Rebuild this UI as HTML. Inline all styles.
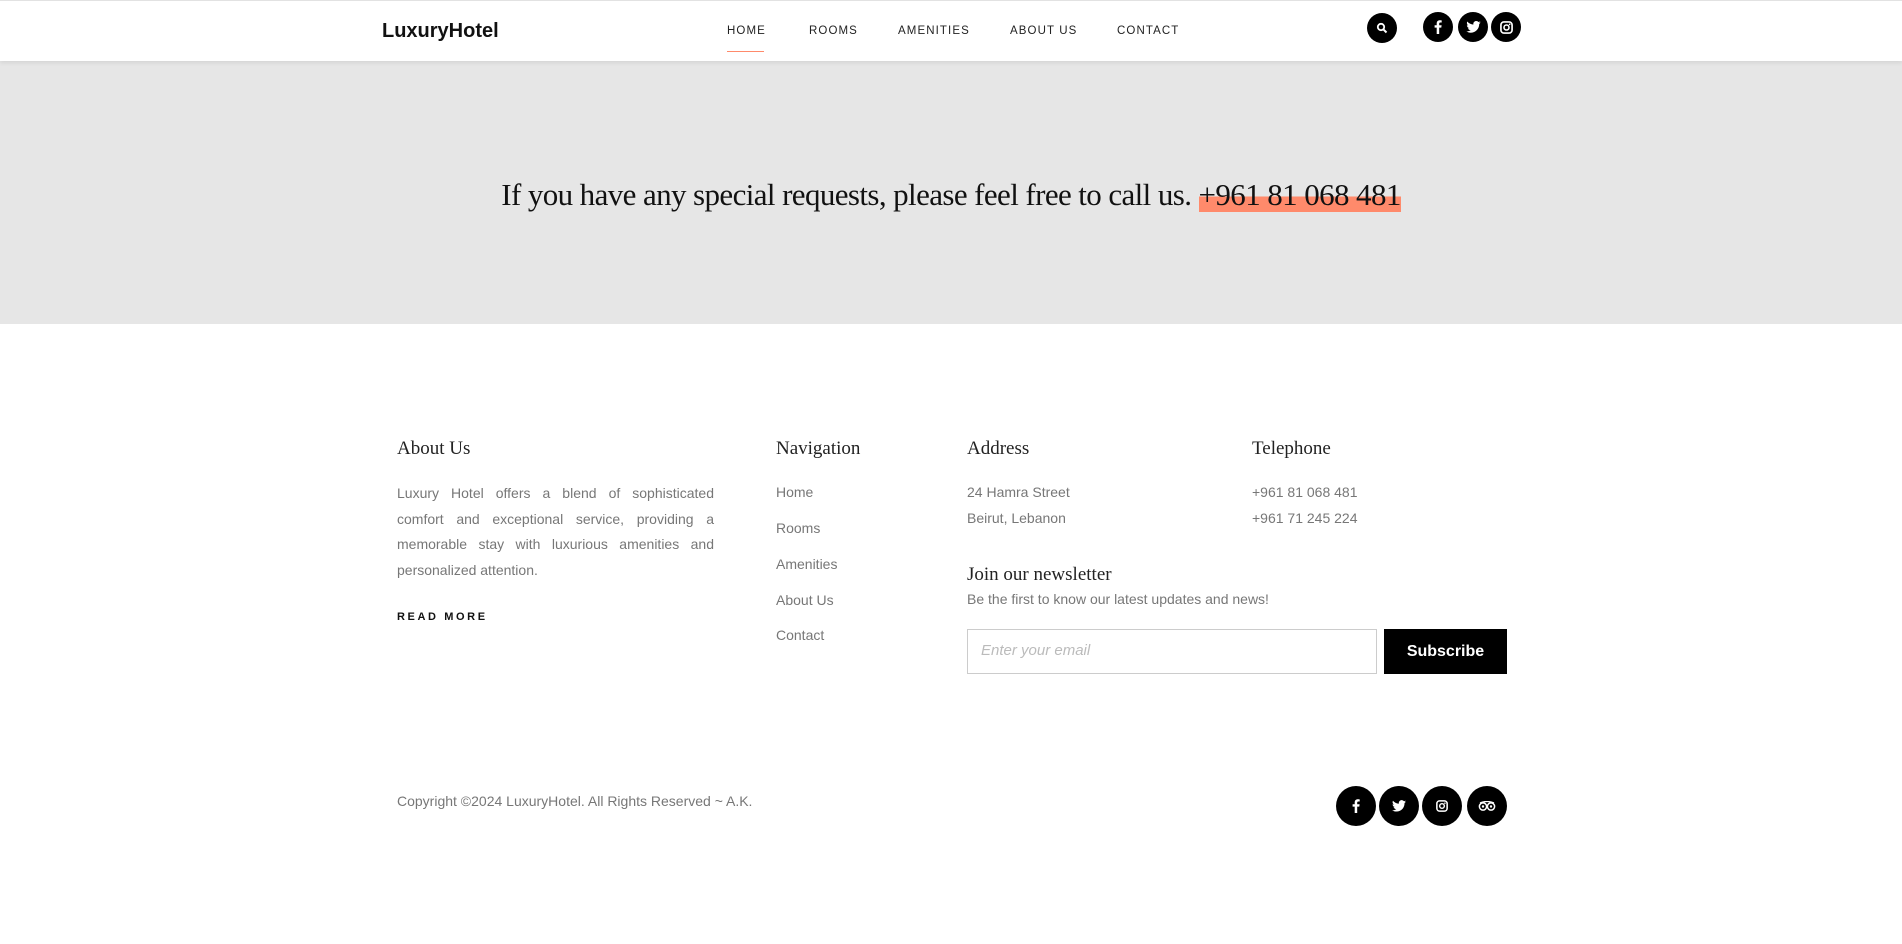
<!DOCTYPE html>
<html><head><meta charset="utf-8"><style>
*{margin:0;padding:0;box-sizing:border-box}
body{width:1902px;height:944px;background:#fff;position:relative;overflow:hidden;font-family:"Liberation Sans",sans-serif}
.a{position:absolute;white-space:nowrap}
.hdr{position:absolute;left:0;top:0;width:1902px;height:61px;background:#fff;border-top:1px solid #e2e2e2;box-shadow:0 2px 4px rgba(0,0,0,.08);z-index:2}
.nav{font-size:11.5px;letter-spacing:1.1px;color:#222;top:24px}
.c{position:absolute;border-radius:50%;background:#000;display:flex;align-items:center;justify-content:center}
.serif{font-family:"Liberation Serif",serif;color:#222}
.h{font-size:19px;top:438px}
.t{font-size:14px;color:#777;font-weight:300}
</style></head><body>
<div class="hdr">
<div class="a" style="left:382px;top:19px;font-size:20px;font-weight:bold;color:#111">LuxuryHotel</div>
<div class="a nav" style="left:727px">HOME</div>
<div class="a" style="left:727px;top:50px;width:37px;height:1px;background:#ff8a6b"></div>
<div class="a nav" style="left:809px">ROOMS</div>
<div class="a nav" style="left:898px">AMENITIES</div>
<div class="a nav" style="left:1010px">ABOUT US</div>
<div class="a nav" style="left:1117px">CONTACT</div>
<div class="c" style="left:1367px;top:12px;width:30px;height:30px"><svg width="12" height="12" viewBox="0 0 12 12"><circle cx="5" cy="5" r="3.2" fill="none" stroke="#fff" stroke-width="1.8"/><path d="M7.3 7.3L10.5 10.5" stroke="#fff" stroke-width="2"/></svg></div>
<div class="c" style="left:1423px;top:11px;width:30px;height:30px"><svg width="8" height="14" viewBox="0 0 8 14"><path d="M5.2 14V7.6H7.3L7.6 5.2H5.2V3.7C5.2 3 5.4 2.5 6.4 2.5H7.7V.4C7.4.3 6.7.2 5.8.2 3.9.2 2.7 1.4 2.7 3.4V5.2H.6V7.6H2.7V14Z" fill="#fff"/></svg></div>
<div class="c" style="left:1458px;top:11px;width:30px;height:30px"><svg width="15" height="12" viewBox="0 0 24 20"><path d="M24 2.4c-.9.4-1.8.6-2.8.8 1-.6 1.8-1.6 2.2-2.7-1 .6-2 1-3.1 1.2C19.4.7 18.1 0 16.6 0c-2.7 0-4.9 2.2-4.9 4.9 0 .4 0 .8.1 1.1C7.7 5.8 4.1 3.900 1.7.9c-.4.7-.7 1.6-.7 2.5 0 1.7.9 3.2 2.2 4.1-.8 0-1.6-.2-2.2-.6v.1c0 2.4 1.7 4.4 3.9 4.8-.4.1-.8.2-1.3.2-.3 0-.6 0-.9-.1.6 2 2.4 3.4 4.600 3.4-1.7 1.3-3.8 2.1-6.1 2.1-.4 0-.8 0-1.2-.1 2.2 1.4 4.8 2.2 7.5 2.2 9.1 0 14-7.5 14-14v-.6c1-.7 1.8-1.6 2.5-2.5z" fill="#fff"/></svg></div>
<div class="c" style="left:1491px;top:11px;width:30px;height:30px"><svg width="13" height="13" viewBox="0 0 14 14"><rect x="1" y="1" width="12" height="12" rx="3.2" fill="none" stroke="#fff" stroke-width="1.8"/><circle cx="7" cy="7" r="2.7" fill="none" stroke="#fff" stroke-width="1.7"/><circle cx="10.4" cy="3.6" r=".9" fill="#fff"/></svg></div>
</div>
<div class="a" style="left:0;top:61px;width:1902px;height:263px;background:#e6e6e6"></div>
<div class="a serif" style="left:0;width:1902px;text-align:center;top:177px;font-size:31px;letter-spacing:-0.6px;color:#111">If you have any special requests, please feel free to call us. <span style="background:linear-gradient(to bottom,transparent 55%,#ff8a6b 55%)">+961 81 068 481</span></div>

<div class="a serif h" style="left:397px">About Us</div>
<div class="a serif h" style="left:776px">Navigation</div>
<div class="a serif h" style="left:967px">Address</div>
<div class="a serif h" style="left:1252px">Telephone</div>

<div class="a t" style="left:397px;top:481px;width:317px;white-space:normal;text-align:justify;line-height:25.6px">Luxury Hotel offers a blend of sophisticated comfort and exceptional service, providing a memorable stay with luxurious amenities and personalized attention.</div>
<div class="a" style="left:397px;top:611px;font-size:11px;font-weight:bold;letter-spacing:2.6px;color:#111">READ MORE</div>

<div class="a t" style="left:776px;top:484px">Home</div>
<div class="a t" style="left:776px;top:520px">Rooms</div>
<div class="a t" style="left:776px;top:556px">Amenities</div>
<div class="a t" style="left:776px;top:592px">About Us</div>
<div class="a t" style="left:776px;top:627px">Contact</div>

<div class="a t" style="left:967px;top:484px">24 Hamra Street</div>
<div class="a t" style="left:967px;top:510px">Beirut, Lebanon</div>
<div class="a t" style="left:1252px;top:484px">+961 81 068 481</div>
<div class="a t" style="left:1252px;top:510px">+961 71 245 224</div>

<div class="a serif" style="left:967px;top:564px;font-size:19px">Join our newsletter</div>
<div class="a t" style="left:967px;top:591px">Be the first to know our latest updates and news!</div>
<div class="a" style="left:967px;top:629px;width:410px;height:45px;border:1px solid #ccc"></div>
<div class="a" style="left:981px;top:642px;font-size:15px;font-style:italic;color:#bbb">Enter your email</div>
<div class="a" style="left:1384px;top:629px;width:123px;height:45px;background:#000;color:#fff;font-weight:bold;font-size:16px;display:flex;align-items:center;justify-content:center">Subscribe</div>

<div class="a t" style="left:397px;top:793px">Copyright ©2024 LuxuryHotel. All Rights Reserved ~ A.K.</div>

<div class="c" style="left:1336px;top:786px;width:40px;height:40px"><svg width="8" height="14" viewBox="0 0 8 14"><path d="M5.2 14V7.6H7.3L7.6 5.2H5.2V3.7C5.2 3 5.4 2.5 6.4 2.5H7.7V.4C7.4.3 6.7.2 5.8.2 3.9.2 2.7 1.4 2.7 3.4V5.2H.6V7.6H2.7V14Z" fill="#fff"/></svg></div>
<div class="c" style="left:1379px;top:786px;width:40px;height:40px"><svg width="14" height="12" viewBox="0 0 24 20"><path d="M24 2.4c-.9.4-1.8.6-2.8.8 1-.6 1.8-1.6 2.2-2.7-1 .6-2 1-3.1 1.2C19.4.7 18.1 0 16.6 0c-2.7 0-4.9 2.2-4.9 4.9 0 .4 0 .8.1 1.1C7.7 5.8 4.1 3.9 1.7.9c-.4.7-.7 1.6-.7 2.5 0 1.7.9 3.2 2.2 4.1-.8 0-1.6-.2-2.2-.6v.1c0 2.4 1.7 4.4 3.9 4.8-.4.1-.8.2-1.3.2-.3 0-.6 0-.9-.1.6 2 2.4 3.4 4.6 3.4-1.7 1.3-3.8 2.1-6.1 2.1-.4 0-.8 0-1.2-.1 2.2 1.4 4.8 2.2 7.5 2.2 9.1 0 14-7.5 14-14v-.6c1-.7 1.8-1.6 2.5-2.5z" fill="#fff"/></svg></div>
<div class="c" style="left:1422px;top:786px;width:40px;height:40px"><svg width="12" height="12" viewBox="0 0 14 14"><rect x="1" y="1" width="12" height="12" rx="3.2" fill="none" stroke="#fff" stroke-width="1.8"/><circle cx="7" cy="7" r="2.7" fill="none" stroke="#fff" stroke-width="1.7"/><circle cx="10.4" cy="3.6" r=".9" fill="#fff"/></svg></div>
<div class="c" style="left:1467px;top:786px;width:40px;height:40px"><svg width="18" height="10" viewBox="0 0 18 10"><circle cx="5" cy="5.5" r="3.6" fill="none" stroke="#fff" stroke-width="1.5"/><circle cx="13" cy="5.5" r="3.6" fill="none" stroke="#fff" stroke-width="1.5"/><circle cx="5" cy="5.5" r="1.2" fill="#fff"/><circle cx="13" cy="5.5" r="1.2" fill="#fff"/><path d="M2 2Q9-1 16 2" fill="none" stroke="#fff" stroke-width="1.3"/></svg></div>
</body></html>
